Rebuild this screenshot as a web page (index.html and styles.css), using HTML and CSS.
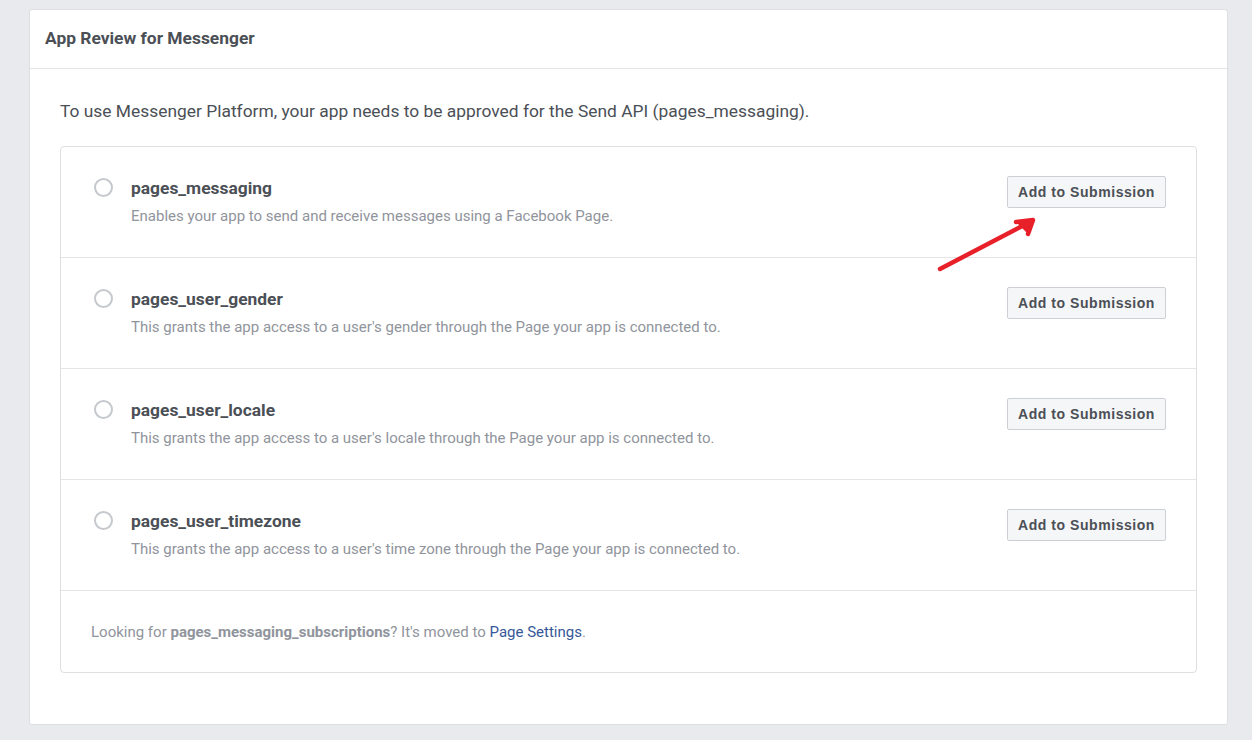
FILE: index.html
```html
<!DOCTYPE html>
<html>
<head>
<meta charset="utf-8">
<link rel="stylesheet" href="styles.css">
</head>
<body>
<div class="card">
  <div class="card-header">App Review for Messenger</div>
  <div class="card-body">
    <p class="intro">To use Messenger Platform, your app needs to be approved for the Send API (pages_messaging).</p>
    <div class="perm-box">
      <div class="perm-row">
        <span class="radio"></span>
        <div class="perm-text">
          <div class="perm-name">pages_messaging</div>
          <div class="perm-desc">Enables your app to send and receive messages using a Facebook Page.</div>
        </div>
        <button class="btn">Add to Submission</button>
      </div>
      <div class="perm-row">
        <span class="radio"></span>
        <div class="perm-text">
          <div class="perm-name">pages_user_gender</div>
          <div class="perm-desc">This grants the app access to a user's gender through the Page your app is connected to.</div>
        </div>
        <button class="btn">Add to Submission</button>
      </div>
      <div class="perm-row">
        <span class="radio"></span>
        <div class="perm-text">
          <div class="perm-name">pages_user_locale</div>
          <div class="perm-desc">This grants the app access to a user's locale through the Page your app is connected to.</div>
        </div>
        <button class="btn">Add to Submission</button>
      </div>
      <div class="perm-row">
        <span class="radio"></span>
        <div class="perm-text">
          <div class="perm-name">pages_user_timezone</div>
          <div class="perm-desc">This grants the app access to a user's time zone through the Page your app is connected to.</div>
        </div>
        <button class="btn">Add to Submission</button>
      </div>
      <div class="perm-footer">Looking for <b>pages_messaging_subscriptions</b>? It's moved to <a href="#">Page Settings</a>.</div>
    </div>
  </div>
</div>
<svg class="arrow" width="110" height="70" viewBox="0 0 110 70">
  <path d="M10 59 L98 13" stroke="#e8202a" stroke-width="4.5" stroke-linecap="round" fill="none"/>
  <path d="M86 12 L103 10 L98 24" stroke="#e8202a" stroke-width="4.5" stroke-linecap="round" stroke-linejoin="round" fill="#e8202a"/>
</svg>
</body>
</html>
```
FILE: styles.css
```css
html, body {
  margin: 0;
  padding: 0;
}
body {
  background: #e9eaed;
  font-family: Roboto, "Liberation Sans", Arial, sans-serif;
  color: #4b4f56;
  padding: 9px 24px 0 29px;
  height: 740px;
  box-sizing: border-box;
  position: relative;
}
.card {
  background: #fff;
  border: 1px solid #dddfe2;
  border-radius: 3px;
  width: 1199px;
  box-sizing: border-box;
}
.card-header {
  height: 59px;
  box-sizing: border-box;
  border-bottom: 1px solid #e5e5e5;
  padding: 17px 15px 0;
  font-size: 17.4px;
  font-weight: 700;
  line-height: 22px;
}
.card-body {
  padding: 30px 30px 51px 30px;
}
.intro {
  margin: 0 0 24px;
  font-size: 17.4px;
  line-height: 22px;
  padding-top: 1px;
}
.perm-box {
  border: 1px solid #dddfe2;
  border-radius: 4px;
}
.perm-row {
  display: flex;
  align-items: flex-start;
  height: 111px;
  box-sizing: border-box;
  border-bottom: 1px solid #e5e5e5;
  padding: 30px 30px 0 33px;
}
.radio {
  width: 19px;
  height: 19px;
  box-sizing: border-box;
  border: 2px solid #c5c8cd;
  border-radius: 50%;
  margin-top: 1px;
  flex: none;
}
.perm-text {
  flex: 1;
  margin-left: 18px;
}
.perm-name {
  font-size: 17.4px;
  font-weight: 700;
  line-height: 22px;
}
.perm-desc {
  font-size: 15px;
  line-height: 18px;
  color: #90949c;
  margin-top: 8px;
}
.btn {
  flex: none;
  margin-top: -1px;
  height: 32px;
  width: 159px;
  box-sizing: border-box;
  background: #f5f6f7;
  border: 1px solid #ccd0d5;
  border-radius: 2px;
  font-family: "Liberation Sans", Arial, sans-serif;
  font-weight: 700;
  font-size: 14px;
  letter-spacing: 0.55px;
  color: #4b4f56;
  padding: 0;
}
.perm-footer {
  padding: 32px 30px 31px;
  font-size: 15px;
  line-height: 18px;
  color: #90949c;
}
.perm-footer b {
  font-weight: 700;
}
.perm-footer a {
  color: #365899;
  text-decoration: none;
}
.arrow {
  position: absolute;
  left: 930px;
  top: 210px;
}
```
